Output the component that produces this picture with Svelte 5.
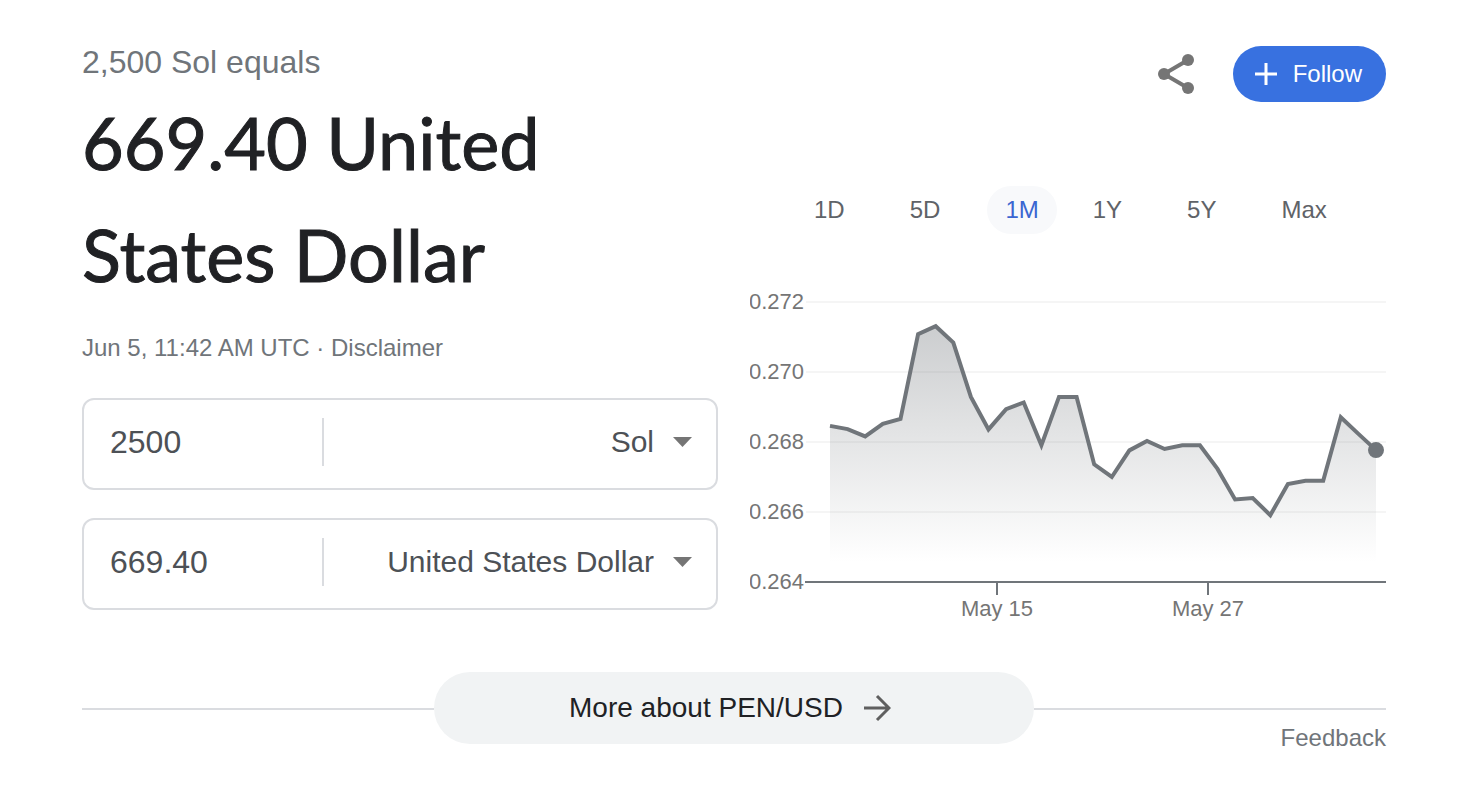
<script lang="ts">
	type Row = { id: string; label: string; amount: string; currency: string };

	const currencies = ['Sol', 'United States Dollar', 'Euro', 'Pound sterling'];
	// short ranges and long ranges sit in their own groups
	const rangeGroups = [
		['1D', '5D', '1M'],
		['1Y', '5Y', 'Max']
	];

	let rows = $state<Row[]>([
		{ id: 'from', label: 'From', amount: '2500', currency: 'Sol' },
		{ id: 'to', label: 'To', amount: '669.40', currency: 'United States Dollar' }
	]);
	let range = $state('1M');

	const rates = [
		0.26846, 0.26837, 0.26816, 0.26852, 0.26866, 0.27108, 0.27131, 0.27084,
		0.26929, 0.26836, 0.26894, 0.26913, 0.26791, 0.26929, 0.26929, 0.26736,
		0.267, 0.26776, 0.26803, 0.2678, 0.26791, 0.26791, 0.26723, 0.26636,
		0.2664, 0.26591, 0.2668, 0.26689, 0.26689, 0.26871, 0.26823, 0.26777
	];
	const gridRates = [0.272, 0.27, 0.268, 0.266];
	const ticks = [
		{ x: 247, label: 'May 15' },
		{ x: 458, label: 'May 27' }
	];

	const left = 80;
	const right = 626;
	const bottom = 296;

	const xAt = (i: number) => left + (i * (right - left)) / (rates.length - 1);
	const yAt = (rate: number) => bottom - (rate - 0.264) * 35000;

	const points = rates.map((r, i) => `${xAt(i).toFixed(1)},${yAt(r).toFixed(1)}`).join(' ');
	const area = `${left},${bottom} ${points} ${right},${bottom}`;
</script>

<main class="converter">
	<div class="columns">
		<section class="convert">
			<div class="source">2,500 Sol equals</div>
			<h1>669.40 United States Dollar</h1>
			<p class="stamp">Jun 5, 11:42 AM UTC · <a href="#disclaimer">Disclaimer</a></p>

			<div class="fields">
				{#each rows as row (row.id)}
					<div class="field">
						<input type="text" inputmode="decimal" aria-label="{row.label} amount" bind:value={row.amount} />
						<span class="divider"></span>
						<select aria-label="{row.label} currency" bind:value={row.currency}>
							{#each currencies as c}
								<option value={c}>{c}</option>
							{/each}
						</select>
						<svg class="caret" viewBox="0 0 20 10" aria-hidden="true"><path d="M1 0h19L10.5 10z" /></svg>
					</div>
				{/each}
			</div>
		</section>

		<section class="history">
			<div class="actions">
				<button class="share" aria-label="Share">
					<svg viewBox="0 0 36 40" aria-hidden="true">
						<path d="M30 6L6 20l24 14" fill="none" stroke="currentColor" stroke-width="4" />
						<circle cx="30" cy="6" r="6" />
						<circle cx="6" cy="20" r="6" />
						<circle cx="30" cy="34" r="6" />
					</svg>
				</button>
				<button class="follow">
					<svg viewBox="0 0 22 22" aria-hidden="true"><path d="M11 0v22M0 11h22" stroke="currentColor" stroke-width="3" /></svg>
					Follow
				</button>
			</div>

			<div class="ranges">
				{#each rangeGroups as group}
					<div class="group">
						{#each group as r}
							<button class="range" class:selected={range === r} aria-pressed={range === r} onclick={() => (range = r)}>{r}</button>
						{/each}
					</div>
				{/each}
			</div>

			<svg class="chart" viewBox="0 0 636 340" role="img" aria-label="PEN to USD, past month">
				<defs>
					<linearGradient id="fade" gradientUnits="userSpaceOnUse" x1="0" y1="40" x2="0" y2="276">
						<stop offset="0" stop-color="#70757a" stop-opacity="0.36" />
						<stop offset="1" stop-color="#70757a" stop-opacity="0" />
					</linearGradient>
				</defs>
				{#each gridRates as g}
					<line class="grid" x1="56" x2="636" y1={yAt(g)} y2={yAt(g)} />
					<text x="54" y={yAt(g) + 7} text-anchor="end">{g.toFixed(3)}</text>
				{/each}
				<text x="54" y={bottom + 7} text-anchor="end">0.264</text>
				<polygon points={area} fill="url(#fade)" />
				<polyline class="line" {points} />
				<circle class="dot" cx={right} cy={yAt(rates[rates.length - 1])} r="8" />
				<line class="axis" x1="55" x2="636" y1={bottom} y2={bottom} />
				{#each ticks as t}
					<line class="axis" x1={t.x} x2={t.x} y1={bottom} y2={bottom + 13} />
					<text x={t.x} y={bottom + 34} text-anchor="middle">{t.label}</text>
				{/each}
			</svg>
		</section>
	</div>

	<footer>
		<div class="side"></div>
		<a class="more" href="#pen-usd">
			More about PEN/USD
			<svg viewBox="0 0 28 28" aria-hidden="true">
				<path d="M1 14h25M14 2l12 12-12 12" fill="none" stroke="currentColor" stroke-width="3" />
			</svg>
		</a>
		<div class="side"><a href="#feedback">Feedback</a></div>
	</footer>
</main>

<style>
	:global(body) {
		margin: 0;
		background: #fff;
	}
	.converter {
		padding: 42px 86px 48px 82px;
		font-family: "Liberation Sans", Arial, sans-serif;
		font-size: 24px;
		line-height: 32px;
		color: #70757a;
	}
	.converter a {
		color: inherit;
		text-decoration: none;
	}
	button, input, select {
		font: inherit;
		color: inherit;
		background: none;
		border: none;
		padding: 0;
		margin: 0;
	}
	button, select {
		cursor: pointer;
	}
	svg {
		display: block;
		flex-shrink: 0;
		fill: currentColor;
	}
	.columns {
		display: grid;
		grid-template-columns: 1fr 1fr;
		gap: 32px;
	}
	.source {
		font-size: 32px;
		line-height: 40px;
	}
	h1 {
		margin: 4px 0 22px;
		font-family: Lato, "Open Sans", sans-serif;
		font-size: 72px;
		font-weight: 400;
		line-height: 112px;
		color: #202124;
		max-width: 540px;
		-webkit-text-stroke: 1px currentColor;
	}
	.stamp {
		margin: 0 0 34px;
	}
	.fields {
		display: flex;
		flex-direction: column;
		gap: 28px;
	}
	.field {
		display: flex;
		align-items: center;
		box-sizing: border-box;
		height: 92px;
		padding: 0 24px 4px 26px;
		border: 2px solid #dadce0;
		border-radius: 12px;
		color: #4d5156;
	}
	.field input {
		flex: 0 0 212px;
		width: 212px;
		height: 48px;
		font-size: 32px;
		outline: none;
	}
	.divider {
		width: 2px;
		height: 48px;
		background: #dadce0;
	}
	.field select {
		flex: 1;
		min-width: 0;
		height: 48px;
		margin-right: 18px;
		appearance: none;
		font-size: 30px;
		text-align: right;
		text-align-last: right;
		outline: none;
	}
	.caret {
		width: 20px;
		height: 10px;
		color: #757575;
	}
	.history {
		padding-top: 4px;
	}
	.actions {
		display: flex;
		justify-content: flex-end;
		align-items: center;
		gap: 39px;
	}
	.share {
		color: #757575;
	}
	.share svg {
		width: 36px;
		height: 40px;
	}
	.follow {
		display: flex;
		align-items: center;
		gap: 16px;
		height: 56px;
		padding: 0 24px 0 22px;
		border-radius: 28px;
		background: #3871e0;
		color: #fff;
	}
	.follow svg {
		width: 22px;
		height: 22px;
	}
	.ranges {
		display: flex;
		gap: 18px;
		margin-top: 84px;
		padding-left: 46px;
	}
	.group {
		display: flex;
		gap: 29px;
	}
	.range {
		height: 48px;
		padding: 0 18px;
		border-radius: 24px;
		color: #5f6368;
	}
	.range.selected {
		background: #f8f9fb;
		color: #3b66d1;
	}
	.chart {
		width: 100%;
		margin-top: 52px;
	}
	.chart text {
		font-size: 22px;
		fill: #757575;
	}
	.grid {
		stroke: #f5f5f5;
		stroke-width: 2;
	}
	.axis {
		stroke: #70757a;
		stroke-width: 2;
	}
	.line {
		fill: none;
		stroke: #70757a;
		stroke-width: 4;
	}
	.dot {
		fill: #70757a;
	}
	footer {
		display: grid;
		grid-template-columns: 1fr 600px 1fr;
		margin-top: 46px;
	}
	.side {
		margin-top: 36px;
		padding-top: 12px;
		border-top: 2px solid #dadce0;
		text-align: right;
	}
	footer .more {
		display: flex;
		align-items: center;
		justify-content: center;
		gap: 20px;
		height: 72px;
		padding-right: 8px;
		box-sizing: border-box;
		border-radius: 36px;
		background: #f1f3f4;
		color: #202124;
		font-size: 28px;
	}
	.more svg {
		width: 28px;
		height: 28px;
		color: #5f5f5f;
	}
</style>
